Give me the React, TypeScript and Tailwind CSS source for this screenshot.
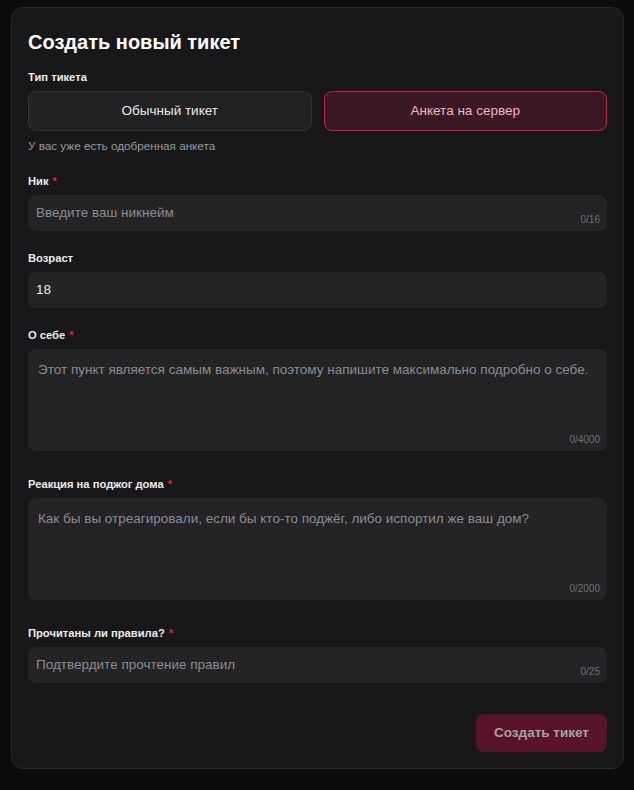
import React from "react";

const font = { fontFamily: "'Liberation Sans', Arial, sans-serif" };

function Label({ text, req }: { text: string; req?: boolean }) {
  return (
    <div className="text-[11.2px] leading-4 font-bold text-[#ededed] mb-1.5">
      {text}
      {req && <span className="text-[#e11d48] ml-1">*</span>}
    </div>
  );
}

function Input({ placeholder, value, counter }: { placeholder?: string; value?: string; counter?: string }) {
  return (
    <div className="relative h-9 rounded-lg bg-[#242427] flex items-center px-2">
      {value ? (
        <span className="text-[13.5px] text-[#ececec]">{value}</span>
      ) : (
        <span className="text-[13.5px] text-[#8b8b93]">{placeholder}</span>
      )}
      {counter && (
        <span className="absolute right-[7px] bottom-[5px] text-[10px] leading-3 text-[#6e6e76]">{counter}</span>
      )}
    </div>
  );
}

function Area({ placeholder, counter }: { placeholder: string; counter: string }) {
  return (
    <div className="relative h-[102px] rounded-lg bg-[#242427] px-[10px] pt-[8px]">
      <span className="text-[13.5px] leading-[18px] text-[#8b8b93]">{placeholder}</span>
      <span className="absolute right-[7px] bottom-[5px] text-[10px] leading-3 text-[#6e6e76]">{counter}</span>
    </div>
  );
}

export default function App() {
  return (
    <div className="min-h-screen w-full bg-[#0c0c0e] pt-[7px] pl-[11px]" style={font}>
      <div className="w-[613px] h-[762px] rounded-xl border border-[#29292c] bg-[#18181a] px-4 pt-[20px] pb-4 flex flex-col">
        <h1 className="text-[20px] leading-7 font-bold text-white">Создать новый тикет</h1>
        <div className="mt-[13px]">
          <Label text="Тип тикета" />
          <div className="flex gap-3">
            <div className="flex-1 h-10 rounded-lg border border-[#333336] bg-[#222224] flex items-center justify-center text-[13.5px] text-[#e8e8e8]">
              Обычный тикет
            </div>
            <div className="flex-1 h-10 rounded-lg border border-[#c81e45] bg-[#3b1824] flex items-center justify-center text-[13.5px] text-[#f2b6c6]">
              Анкета на сервер
            </div>
          </div>
          <div className="mt-[7px] text-[11.7px] leading-4 text-[#9a9aa2]">У вас уже есть одобренная анкета</div>
        </div>
        <div className="mt-[19px]">
          <Label text="Ник" req />
          <Input placeholder="Введите ваш никнейм" counter="0/16" />
        </div>
        <div className="mt-[19px]">
          <Label text="Возраст" />
          <Input value="18" />
        </div>
        <div className="mt-[19px]">
          <Label text="О себе" req />
          <Area placeholder="Этот пункт является самым важным, поэтому напишите максимально подробно о себе." counter="0/4000" />
        </div>
        <div className="mt-[25px]">
          <Label text="Реакция на поджог дома" req />
          <Area placeholder="Как бы вы отреагировали, если бы кто-то поджёг, либо испортил же ваш дом?" counter="0/2000" />
        </div>
        <div className="mt-[25px]">
          <Label text="Прочитаны ли правила?" req />
          <Input placeholder="Подтвердите прочтение правил" counter="0/25" />
        </div>
        <div className="mt-auto flex justify-end">
          <div className="w-[131px] h-[38px] rounded-lg bg-[#5a1429] flex items-center justify-center text-[13.5px] font-bold text-[#a3a3a3]">
            Создать тикет
          </div>
        </div>
      </div>
    </div>
  );
}
